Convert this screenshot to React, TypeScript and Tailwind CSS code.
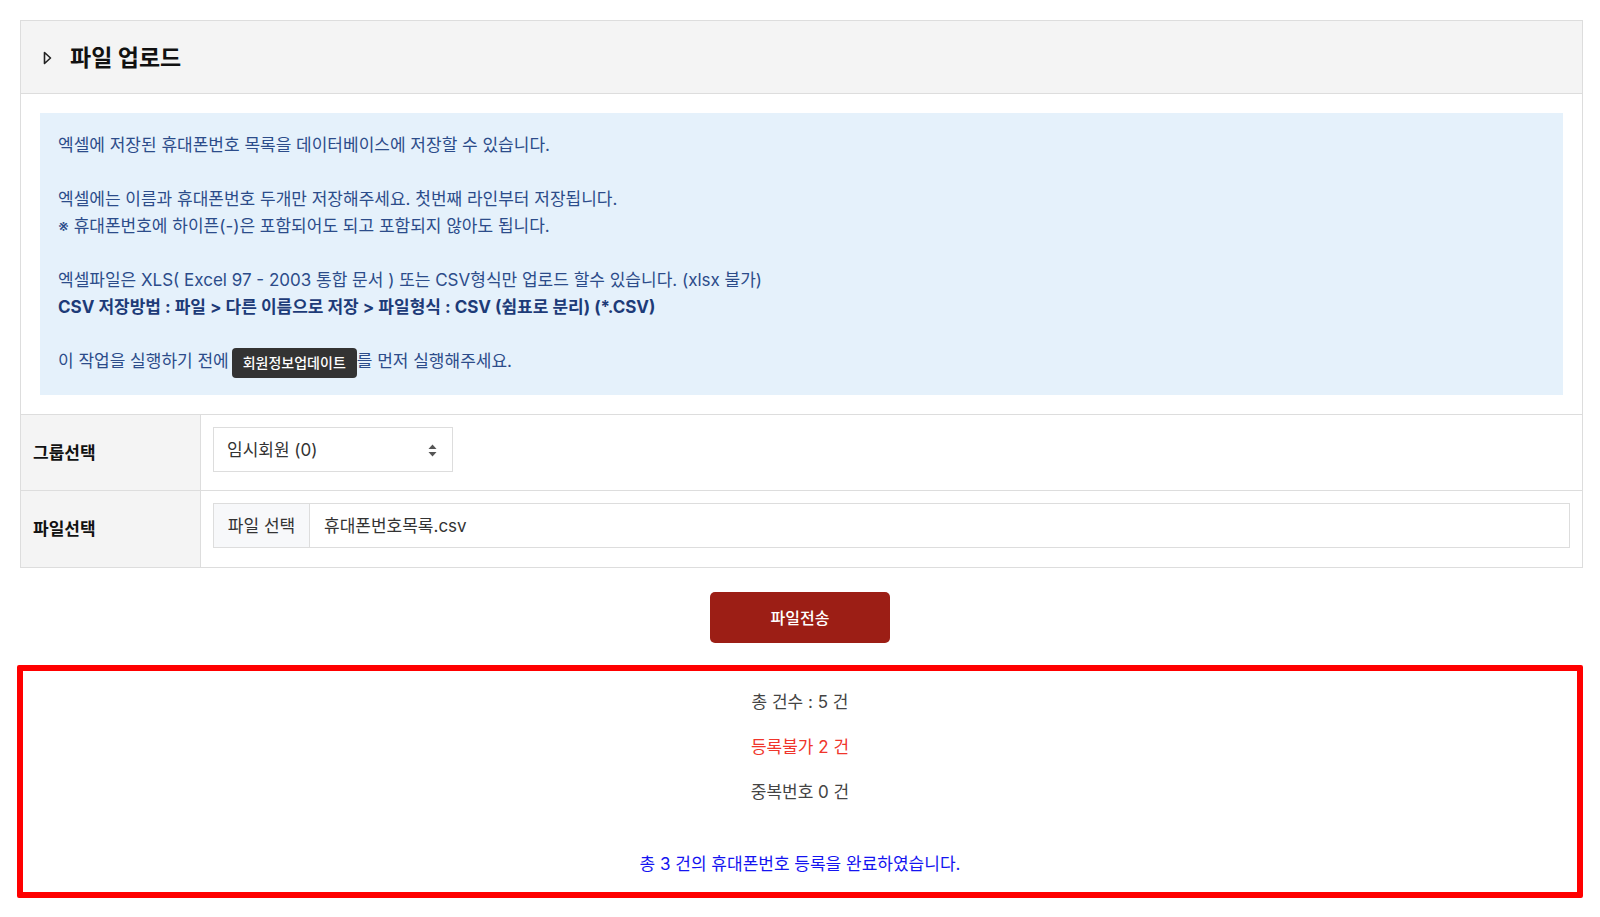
import { useState } from 'react'

const FONT = "font-[Inter,'Noto_Sans_CJK_KR',sans-serif]"

function Triangle() {
  return (
    <svg width="9" height="14" viewBox="0 0 9 14" className="shrink-0">
      <path d="M1.5 1.5 L7.5 7 L1.5 12.5 Z" fill="none" stroke="#222" strokeWidth="1.6" strokeLinejoin="round" />
    </svg>
  )
}

function SortIcon() {
  return (
    <svg width="9" height="13" viewBox="0 0 9 13">
      <path d="M4.5 0.5 L8.5 5 L0.5 5 Z" fill="#555" />
      <path d="M4.5 12.5 L8.5 8 L0.5 8 Z" fill="#555" />
    </svg>
  )
}

interface ResultatEnvoi {
  total: number
  refuses: number
  doublons: number
}

export default function App() {
  const [groupe, setGroupe] = useState('임시회원 (0)')
  const [resultat] = useState<ResultatEnvoi>({ total: 5, refuses: 2, doublons: 0 })
  const enregistres = resultat.total - resultat.refuses - resultat.doublons

  return (
    <div className={`${FONT} min-h-screen bg-white pt-5 text-[17px] text-[#333]`}>
      {/* Panneau upload */}
      <div className="ml-[20px] w-[1563px] border border-[#dddddd]">
        <div className="flex h-[73px] items-center gap-[18px] border-b border-[#dddddd] bg-[#f4f4f4] pl-[22px] pt-[2px]">
          <Triangle />
          <h2 className="text-[23px] font-bold text-[#111]">파일 업로드</h2>
        </div>

        <div className="border-b border-[#dddddd] p-[19px]">
          <div className="bg-[#e5f1fb] pl-[18px] pt-[19px] pb-[20px] leading-[27px] text-[#2c4c8a]">
            <p>엑셀에 저장된 휴대폰번호 목록을 데이터베이스에 저장할 수 있습니다.</p>
            <p className="mt-[27px]">엑셀에는 이름과 휴대폰번호 두개만 저장해주세요. 첫번째 라인부터 저장됩니다.</p>
            <p>※ 휴대폰번호에 하이픈(-)은 포함되어도 되고 포함되지 않아도 됩니다.</p>
            <p className="mt-[27px]">엑셀파일은 XLS( Excel 97 - 2003 통합 문서 ) 또는 CSV형식만 업로드 할수 있습니다. (xlsx 불가)</p>
            <p className="font-bold text-[#1d3b78]">CSV 저장방법 : 파일 &gt; 다른 이름으로 저장 &gt; 파일형식 : CSV (쉼표로 분리) (*.CSV)</p>
            <div className="mt-[27px] flex h-[27px] items-center">
              <span>이 작업을 실행하기 전에</span>
              <button className="ml-[3px] mt-[2px] flex h-[30px] w-[125px] items-center justify-center rounded-[4px] bg-[#333333] text-[14px] font-medium text-white">
                회원정보업데이트
              </button>
              <span>를 먼저 실행해주세요.</span>
            </div>
          </div>
        </div>

        {/* Groupe */}
        <div className="flex h-[76px] border-b border-[#dddddd]">
          <div className="flex w-[180px] shrink-0 items-center border-r border-[#dddddd] bg-[#f4f4f4] pl-[12px] pt-[2px] font-bold text-[#111]">
            그룹선택
          </div>
          <div className="flex-1 px-3 pt-3">
            <div className="relative flex h-[45px] w-[240px] items-center border border-[#dddddd] bg-white pl-[13px]">
              <select
                value={groupe}
                onChange={(e) => setGroupe(e.target.value)}
                className="h-full w-full appearance-none bg-transparent pt-[2px] text-[17px] text-[#333] outline-none"
              >
                <option>임시회원 (0)</option>
                <option>정회원 (0)</option>
              </select>
              <span className="pointer-events-none absolute right-[15px] top-[16px]">
                <SortIcon />
              </span>
            </div>
          </div>
        </div>

        {/* Fichier */}
        <div className="flex h-[76px]">
          <div className="flex w-[180px] shrink-0 items-center border-r border-[#dddddd] bg-[#f4f4f4] pl-[12px] pt-[2px] font-bold text-[#111]">
            파일선택
          </div>
          <div className="flex-1 px-3 pt-3">
            <div className="flex h-[45px] items-stretch border border-[#dddddd] bg-white">
              <div className="flex w-[96px] items-center justify-center border-r border-[#dddddd] bg-[#f7f8fa] pt-[2px] text-[#333]">
                파일 선택
              </div>
              <div className="flex items-center pl-[14px] pt-[2px] text-[#333]">휴대폰번호목록.csv</div>
            </div>
          </div>
        </div>
      </div>

      <div className="mt-[24px] flex justify-center">
        <button className="h-[51px] w-[180px] rounded-[5px] bg-[#9c1e15] pt-[1px] text-[16px] font-medium text-white">
          파일전송
        </button>
      </div>

      {/* Résultat */}
      <div className="ml-[17px] mt-[22px] w-[1566px] rounded-[2px] border-[6px] border-[#ff0000] pt-[19px] pb-[16px] text-center leading-[24px]">
        <p className="text-[#444]">총 건수 : {resultat.total} 건</p>
        <p className="mt-[21px] text-[#f0352b]">등록불가 {resultat.refuses} 건</p>
        <p className="mt-[21px] text-[#444]">중복번호 {resultat.doublons} 건</p>
        <p className="mt-[48px] text-[#1414f0]">총 {enregistres} 건의 휴대폰번호 등록을 완료하였습니다.</p>
      </div>
    </div>
  )
}
